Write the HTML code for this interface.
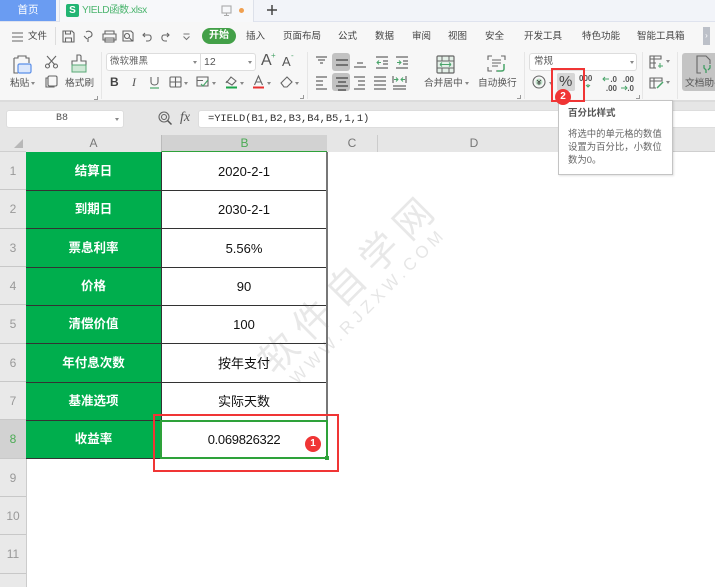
<!DOCTYPE html>
<html><head><meta charset="utf-8">
<style>
html,body{margin:0;padding:0}
body{width:715px;height:587px;overflow:hidden;position:relative;background:#fff;font-family:"Liberation Sans","Microsoft YaHei","Noto Sans CJK SC",sans-serif;color:#444}
.a{position:absolute;white-space:nowrap}
.m{font-size:9.5px;line-height:14px;color:#444;top:30px}
.r{font-size:9.7px;line-height:14px;color:#555}
.l{position:absolute;background:#333;height:1px}
.cell{position:absolute;left:26px;width:135px;height:38px;background:#00ae4d;color:#fff;font-weight:bold;font-size:12.5px;line-height:39px;text-align:center}
.val{position:absolute;left:161px;width:166px;height:38px;font-size:13px;line-height:39px;text-align:center;color:#111}
.rn{position:absolute;left:0;width:26px;height:38px;line-height:38px;text-align:center;font-size:12px;color:#999;border-bottom:1px solid #c8c8c8;box-sizing:border-box}
.ch{position:absolute;top:135px;height:17px;line-height:17px;text-align:center;font-size:12px;color:#777;background:#e6e6e6;box-sizing:border-box}
svg{position:absolute;overflow:visible}
.s{fill:none;stroke:#666;stroke-width:1.1}
.ar{position:absolute;width:0;height:0;border:2.5px solid transparent;border-top:3px solid #888;border-bottom:0}
.hl{position:absolute;background:#c2c2c2;border-radius:3px}
</style></head><body>

<!-- tab bar -->
<div class="a" style="left:0;top:0;width:715px;height:21px;background:#f2f4f9;border-bottom:1px solid #dfe3ee"></div>
<div class="a" style="left:0;top:0;width:56px;height:21px;background:#6a9cf2;color:#fff;font-size:10.5px;line-height:21px;text-align:center">首页</div>
<div class="a" style="left:59px;top:0;width:193px;height:22px;background:#f7f8fa;border-right:1px solid #dde1ea;border-left:1px solid #dde1ea"></div>
<div class="a" style="left:66px;top:4px;width:13px;height:13px;background:#22b573;border-radius:2px;color:#fff;font-size:10px;font-weight:bold;line-height:13px;text-align:center">S</div>
<div class="a" style="left:82px;top:3px;font-size:10.2px;line-height:15px;color:#4cb56f;letter-spacing:-.45px">YIELD函数.xlsx</div>
<svg style="left:221px;top:5px" width="12" height="12"><rect x="1" y="1" width="9" height="7" class="s" style="stroke:#aaa"/><path d="M5.500 8v2M3 10.500h5" class="s" style="stroke:#aaa"/></svg>
<div class="a" style="left:239px;top:8px;width:5px;height:5px;border-radius:50%;background:#f0a050"></div>
<svg style="left:266px;top:4px" width="13" height="13"><path d="M1 6h10M6 1v10" fill="none" stroke="#444" stroke-width="1.500"/></svg>

<!-- menu row -->
<div class="a" style="left:0;top:22px;width:715px;height:79px;background:#f7f7f7"></div>
<div class="a" style="left:0;top:101px;width:715px;height:34px;background:#e6e6e6"></div>
<svg style="left:12px;top:32px" width="12" height="10"><path d="M0 1h11M0 5h11M0 9h11" class="s"/></svg>
<div class="a m" style="left:28px">文件</div>
<div class="a" style="left:55px;top:27px;width:1px;height:18px;background:#ddd"></div>
<svg style="left:62px;top:30px" width="130" height="14">
<path d="M1 1h9l2 2v9H1zM3.500 1v3h5V1M3.500 12V8h6v4" class="s"/>
<path d="M24 2c3-2 6 0 6 2.500s-3 3-4 3M26 8v4M22 6l3 3" class="s"/>
<path d="M43 4V1h9v3M41 4h13v6h-13zM43 8h9v4h-9z" class="s"/>
<path d="M61 1h8l2 2v8h-10zM65 3.500a2.500 2.500 0 1 0 .01 0M67.500 8l3 3" class="s"/>
<path d="M83 3l-2 2 2 2M81 5h6c3 0 3 6-1 6h-2" class="s"/>
<path d="M105 3l2 2-2 2M107 5h-5c-3 0-3 6 1 6h2" class="s"/>
</svg>
<svg style="left:182px;top:33px" width="10" height="8"><path d="M1.500 1h6M1.500 3.500l3 3 3-3" fill="none" stroke="#777"/></svg>
<div class="a" style="left:202px;top:28px;width:34px;height:16px;background:#43a048;border-radius:8px;color:#fff;font-size:10px;font-weight:bold;line-height:16px;text-align:center">开始</div>
<div class="a m" style="left:246px">插入</div>
<div class="a m" style="left:283px">页面布局</div>
<div class="a m" style="left:338px">公式</div>
<div class="a m" style="left:375px">数据</div>
<div class="a m" style="left:412px">审阅</div>
<div class="a m" style="left:448px">视图</div>
<div class="a m" style="left:485px">安全</div>
<div class="a m" style="left:524px">开发工具</div>
<div class="a m" style="left:582px">特色功能</div>
<div class="a m" style="left:637px">智能工具箱</div>
<div class="a" style="left:703px;top:27px;width:7px;height:18px;background:#bcc0c8;color:#fff;font-size:8px;line-height:18px;text-align:center">›</div>

<!-- ribbon separators -->
<div class="a" style="left:101px;top:52px;width:1px;height:47px;background:#e6e6e6"></div>
<div class="a" style="left:307px;top:52px;width:1px;height:47px;background:#e6e6e6"></div>
<div class="a" style="left:524px;top:52px;width:1px;height:47px;background:#e6e6e6"></div>
<div class="a" style="left:642px;top:52px;width:1px;height:47px;background:#e6e6e6"></div>
<div class="a" style="left:677px;top:52px;width:1px;height:47px;background:#e6e6e6"></div>
<div class="a" style="left:0;top:100px;width:715px;height:2px;background:#dcdcdc"></div>

<!-- clipboard -->
<svg style="left:13px;top:54px" width="20" height="22"><path d="M1 4h4V2h8v2h3v5M1 4v15h4" class="s"/><rect x="5" y="10" width="13" height="9" rx="1.500" fill="#dbe7fb" stroke="#5a8ee8" stroke-width="1.200"/></svg>
<div class="a r" style="left:10px;top:77px">粘贴</div><div class="ar" style="left:31px;top:82px"></div>
<svg style="left:45px;top:55px" width="14" height="14"><path d="M2 1l8 9M11 1l-8 9" class="s"/><circle cx="2.500" cy="11" r="2" class="s"/><circle cx="10.500" cy="11" r="2" class="s"/></svg>
<svg style="left:45px;top:75px" width="14" height="14"><rect x="3" y="1" width="9" height="10" rx="1.500" class="s"/><path d="M3 3H1v9h8v-1" class="s"/></svg>
<svg style="left:70px;top:54px" width="18" height="20"><path d="M7 1h3l1 1v5h5v4H2V7h5z" class="s"/><rect x="2" y="11" width="14" height="7" fill="#cfe8d6" stroke="#5aa877"/></svg>
<div class="a r" style="left:65px;top:77px">格式刷</div>
<div class="a" style="left:94px;top:96px;width:3px;height:3px;border-right:1px solid #999;border-bottom:1px solid #999"></div>

<!-- font -->
<div class="a" style="left:106px;top:53px;width:148px;height:16px;background:#fff;border:1px solid #ddd;border-radius:3px"></div>
<div class="a" style="left:200px;top:54px;width:1px;height:16px;background:#ddd"></div>
<div class="a" style="left:110px;top:54px;font-size:9.500px;line-height:16px;color:#666">微软雅黑</div>
<div class="a" style="left:204px;top:54px;font-size:10.500px;line-height:16px;color:#555">12</div>
<div class="ar" style="left:193px;top:61px"></div><div class="ar" style="left:248px;top:61px"></div>
<div class="a" style="left:261px;top:52px;font-size:16px;line-height:18px;color:#555">A</div>
<div class="a" style="left:271px;top:51px;font-size:8px;line-height:10px;color:#4aa56a">+</div>
<div class="a" style="left:282px;top:54px;font-size:13px;line-height:16px;color:#555">A</div>
<div class="a" style="left:291px;top:51px;font-size:8px;line-height:10px;color:#4aa56a">-</div>
<div class="a" style="left:110px;top:75px;font-size:12px;font-weight:bold;line-height:14px;color:#444">B</div>
<div class="a" style="left:132px;top:75px;font-size:12px;font-style:italic;line-height:14px;color:#555;font-family:'Liberation Serif',serif">I</div>
<svg style="left:149px;top:76px" width="11" height="13"><path d="M2 1v5c0 4 7 4 7 0V1" class="s"/><path d="M1 12h9" stroke="#4aa56a" stroke-width="1.200"/></svg>
<svg style="left:169px;top:76px" width="13" height="13"><rect x="1" y="1" width="11" height="10" rx="1" class="s"/><path d="M6.500 1v10M1 6h11" class="s"/></svg>
<div class="ar" style="left:184px;top:82px"></div>
<svg style="left:196px;top:76px" width="13" height="13"><path d="M1 1h11v9H1zM1 4.500h6" class="s"/><path d="M5 8l2 2 5-6" fill="none" stroke="#4aa56a" stroke-width="1.200"/></svg>
<div class="ar" style="left:212px;top:82px"></div>
<svg style="left:225px;top:75px" width="13" height="14"><path d="M6 2l5 4-4 4-5-3zM2 6l-1 2" class="s"/><path d="M1 12.500h11" stroke="#1aa64a" stroke-width="2"/></svg>
<div class="ar" style="left:240px;top:82px"></div>
<svg style="left:252px;top:75px" width="13" height="14"><path d="M2.500 10L6.500 1l4 9M4 7h5" class="s"/><path d="M1 12.500h11" stroke="#e83030" stroke-width="2"/></svg>
<div class="ar" style="left:267px;top:82px"></div>
<svg style="left:280px;top:76px" width="14" height="13"><path d="M1 7l6-6 5 5-5 5H4z" class="s"/></svg>
<div class="ar" style="left:295px;top:82px"></div>
<div class="a" style="left:300px;top:95px;width:3px;height:3px;border-right:1px solid #999;border-bottom:1px solid #999"></div>

<!-- alignment -->
<div class="hl" style="left:332px;top:53px;width:18px;height:18px"></div>
<div class="hl" style="left:332px;top:73px;width:18px;height:18px"></div>
<svg style="left:300px;top:48px" width="120" height="48">
<g stroke="#666" stroke-width="1.200" fill="none">
<path d="M16 9h11M18 12h7M20 15h3"/>
<path d="M36 12h12M36 17h12" stroke="#444"/>
<path d="M57 15h6M54 19h12"/>
<path d="M76 9h12M83 13h5M83 16h5M76 20h12"/>
<path d="M96 9h12M103 13h5M103 16h5M96 20h12"/>
<path d="M16 29h11M16 33h7M16 37h7M16 41h11"/>
<path d="M36 30h12M38 34h8M36 38h12M38 42h8" stroke="#444"/>
<path d="M54 29h11M58 33h7M58 37h7M54 41h11"/>
<path d="M74 29h12M74 33h12M74 37h12M74 41h12"/>
<path d="M93 28v7M106 28v7M93 38h13M93 41h13"/>
</g>
<path d="M81 14.500h-4M79 12.500l-2 2 2 2M97 14.500h4M99 12.500l2 2-2 2M94 31.500h4M96 29.500l2 2-2 2M105 31.500h-4M103 29.500l-2 2 2 2" stroke="#4aa56a" fill="none"/>
</svg>
<svg style="left:436px;top:55px" width="20" height="20"><rect x="1" y="1" width="17" height="17" rx="1" fill="#e4f0e8" stroke="#666" stroke-width="1.200"/><path d="M1 6h17M1 13h17M6 1v5M13 1v5M6 13v5M13 13v5" stroke="#666"/><path d="M4 9.500h11M4 9.500l2-2M4 9.500l2 2M15 9.500l-2-2M15 9.500l-2 2" stroke="#4aa56a" fill="none"/></svg>
<div class="a r" style="left:424px;top:77px">合并居中</div><div class="ar" style="left:465px;top:82px"></div>
<svg style="left:487px;top:55px" width="20" height="18"><path d="M1 5V1h4M14 1h4v4M1 12v4h4M9 16h2M5 5h9M5 8h9M5 11h6" class="s"/><path d="M17 9v5c0 2-2 2-3 2h-4" fill="none" stroke="#4aa56a" stroke-width="1.500"/></svg>
<div class="a r" style="left:478px;top:77px">自动换行</div>
<div class="a" style="left:517px;top:95px;width:3px;height:3px;border-right:1px solid #999;border-bottom:1px solid #999"></div>

<!-- number -->
<div class="a" style="left:529px;top:53px;width:106px;height:16px;background:#fff;border:1px solid #ddd;border-radius:3px;font-size:9.500px;line-height:16px;color:#555;text-indent:4px">常规</div>
<div class="ar" style="left:630px;top:61px"></div>
<svg style="left:532px;top:75px" width="15" height="15"><circle cx="7" cy="7" r="6" class="s"/><circle cx="7" cy="7" r="3.500" fill="#bfe0c8"/><path d="M5 5l2 2 2-2M7 7v3M5 8h4" stroke="#333" fill="none" stroke-width=".8"/></svg>
<div class="ar" style="left:549px;top:82px"></div>
<div class="a" style="left:557px;top:73px;width:18px;height:18px;background:#d6d6d6;border-radius:2px"></div>
<div class="a" style="left:559px;top:73px;font-size:15px;line-height:18px;color:#444">%</div>
<div class="a" style="left:579px;top:74px;font-size:8px;font-weight:bold;line-height:9px;color:#555">000</div>
<svg style="left:585px;top:84px" width="6" height="6"><path d="M1 1l2 2 2-2M3 0v3" stroke="#4aa56a" fill="none"/></svg>
<div class="a" style="left:603px;top:75px;font-size:8px;font-weight:bold;line-height:9px;color:#555;text-align:right;width:14px">.0<br>.00</div>
<svg style="left:602px;top:76px" width="7" height="6"><path d="M7 3H1M3 1L1 3l2 2" stroke="#4aa56a" fill="none"/></svg>
<div class="a" style="left:620px;top:75px;font-size:8px;font-weight:bold;line-height:9px;color:#555;text-align:right;width:14px">.00<br>.0</div>
<svg style="left:621px;top:85px" width="7" height="6"><path d="M0 3h6M4 1l2 2-2 2" stroke="#4aa56a" fill="none"/></svg>
<div class="a" style="left:636px;top:95px;width:3px;height:3px;border-right:1px solid #999;border-bottom:1px solid #999"></div>

<svg style="left:649px;top:55px" width="16" height="35"><path d="M1 1h11v3H1zM1 4v9h6M1 8h6M5 1v12" class="s"/><path d="M9 11h5M11 8v5" stroke="#4aa56a"/><path d="M1 23h12v3H1zM1 26v7h6M5 23v10" class="s"/><path d="M8 33l6-6" stroke="#4aa56a" stroke-width="1.500"/></svg>
<div class="ar" style="left:666px;top:60px"></div><div class="ar" style="left:666px;top:81px"></div>
<div class="a" style="left:682px;top:53px;width:33px;height:38px;background:#c4c4c4;border-radius:3px 0 0 3px"></div>
<svg style="left:696px;top:55px" width="16" height="19"><path d="M5 18H1V1h9l4 4v4" class="s"/><path d="M8 10v3l2 2v3M14 10v3l-2 2" fill="none" stroke="#3f9c62" stroke-width="1.300"/></svg>
<div class="a r" style="left:685px;top:77px;width:30px;overflow:hidden">文档助手</div>

<!-- formula bar -->
<div class="a" style="left:6px;top:110px;width:116px;height:16px;background:#fff;border:1px solid #ddd;border-radius:3px;font-size:10px;line-height:16px;text-align:center;font-family:'Liberation Mono',monospace;color:#555;text-indent:-6px">B8</div>
<div class="ar" style="left:115px;top:118px"></div>
<svg style="left:158px;top:111px" width="15" height="15"><circle cx="6" cy="6" r="5" class="s"/><circle cx="6" cy="6" r="2.500" class="s"/><path d="M9.500 9.500l4 4" stroke="#555" stroke-width="1.500"/></svg>
<div class="a" style="left:180px;top:110px;font-family:'Liberation Serif',serif;font-style:italic;font-size:14px;line-height:16px;color:#555">fx</div>
<div class="a" style="left:198px;top:110px;width:517px;height:16px;background:#fff;border:1px solid #ddd;border-right:0;border-radius:3px 0 0 3px;font-family:'Liberation Mono',monospace;font-size:10.500px;line-height:16px;color:#333;text-indent:9px;letter-spacing:-.1px">=YIELD(B1,B2,B3,B4,B5,1,1)</div>

<!-- headers -->
<div class="a" style="left:0;top:135px;width:715px;height:17px;background:#e6e6e6;border-bottom:1px solid #cfcfcf;box-sizing:border-box"></div>
<svg style="left:14px;top:139px" width="10" height="10"><path d="M9 0v9H0z" fill="#b8b8b8"/></svg>
<div class="ch" style="left:26px;width:135px">A</div>
<div class="ch" style="left:161px;width:166px;background:#d2d2d2;color:#4cab55;border-bottom:1px solid #2ea23a;border-left:1px solid #bbb">B</div>
<div class="ch" style="left:327px;width:51px;border-right:1px solid #ccc">C</div>
<div class="ch" style="left:378px;width:192px">D</div>

<div class="a" style="left:0;top:152px;width:26px;height:435px;background:#e9e9e9;border-right:1px solid #ccc"></div>
<div class="rn" style="top:152px;height:38px">1</div>
<div class="rn" style="top:190px;height:39px">2</div>
<div class="rn" style="top:229px;height:38px">3</div>
<div class="rn" style="top:267px;height:38px">4</div>
<div class="rn" style="top:305px;height:39px">5</div>
<div class="rn" style="top:344px;height:38px">6</div>
<div class="rn" style="top:382px;height:38px">7</div>
<div class="rn" style="top:420px;height:39px;background:#d2d2d2;color:#4cab55">8</div>
<div class="rn" style="top:459px;height:38px">9</div>
<div class="rn" style="top:497px;height:38px">10</div>
<div class="rn" style="top:535px;height:39px">11</div>
<div class="rn" style="top:574px;height:13px;border:0"></div>

<!-- watermark -->
<div class="a" style="left:197px;top:267px;width:300px;transform:rotate(-45deg);font-size:38px;line-height:40px;color:rgba(0,0,0,.09);letter-spacing:9.500px;text-indent:9.500px;text-align:center">软件自学网</div>
<div class="a" style="left:217px;top:299px;width:300px;transform:rotate(-45deg);font-size:17px;line-height:18px;color:rgba(0,0,0,.1);letter-spacing:4.500px;text-indent:4.500px;text-align:center">WWW.RJZXW.COM</div>

<!-- cells -->
<div class="cell" style="top:152px">结算日</div><div class="val" style="top:152px">2020-2-1</div>
<div class="cell" style="top:190px;height:39px">到期日</div><div class="val" style="top:190px">2030-2-1</div>
<div class="cell" style="top:229px">票息利率</div><div class="val" style="top:229px">5.56%</div>
<div class="cell" style="top:267px">价格</div><div class="val" style="top:267px">90</div>
<div class="cell" style="top:305px;height:39px">清偿价值</div><div class="val" style="top:305px">100</div>
<div class="cell" style="top:344px">年付息次数</div><div class="val" style="top:344px">按年支付</div>
<div class="cell" style="top:382px">基准选项</div><div class="val" style="top:382px">实际天数</div>
<div class="cell" style="top:420px;height:39px">收益率</div><div class="val" style="top:420px;letter-spacing:-.3px">0.069826322</div>

<!-- grid lines -->
<div class="l" style="left:26px;top:190px;width:301px"></div>
<div class="l" style="left:26px;top:228px;width:301px"></div>
<div class="l" style="left:26px;top:267px;width:301px"></div>
<div class="l" style="left:26px;top:305px;width:301px"></div>
<div class="l" style="left:26px;top:343px;width:301px"></div>
<div class="l" style="left:26px;top:382px;width:301px"></div>
<div class="l" style="left:26px;top:420px;width:301px"></div>
<div class="l" style="left:26px;top:458px;width:135px"></div>
<div class="a" style="left:161px;top:152px;width:1px;height:268px;background:#333"></div>
<div class="a" style="left:326px;top:152px;width:2px;height:268px;background:#777"></div>

<!-- selection -->
<div class="a" style="left:160px;top:420px;width:164px;height:35px;border:2px solid #2ea23a"></div>
<div class="a" style="left:325px;top:456px;width:4px;height:4px;background:#2ea23a"></div>

<!-- tooltip -->
<div class="a" style="left:558px;top:100px;width:113px;height:73px;background:#fff;border:1px solid #c4c4c4;box-shadow:1px 1px 2px rgba(0,0,0,.12)"></div>
<div class="a" style="left:568px;top:107px;font-size:9.500px;font-weight:bold;line-height:14px;color:#555">百分比样式</div>
<div class="a" style="left:568px;top:126.500px;font-size:9.400px;line-height:13.300px;color:#666">将选中的单元格的数值<br>设置为百分比，小数位<br>数为0。</div>

<!-- annotations -->
<div class="a" style="left:153px;top:414px;width:182px;height:54px;border:2px solid #f03535"></div>
<div class="a" style="left:305px;top:436px;width:16px;height:16px;border-radius:50%;background:#f03535;color:#fff;font-size:10px;font-weight:bold;line-height:16px;text-align:center">1</div>
<div class="a" style="left:551px;top:68px;width:30px;height:30px;border:2px solid #f03535"></div>
<div class="a" style="left:555px;top:89px;width:16px;height:16px;border-radius:50%;background:#f03535;color:#fff;font-size:10px;font-weight:bold;line-height:16px;text-align:center">2</div>
</body></html>
